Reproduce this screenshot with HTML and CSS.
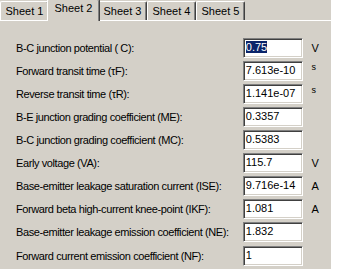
FILE: index.html
```html
<!DOCTYPE html>
<html>
<head>
    <title>Model Parameters</title>
    <link rel="stylesheet" href="styles.css">
</head>
<body>
    <div class="dialog">
        <!-- Tab strip -->
        <div class="tabs">
            <div class="tab">Sheet 1</div>
            <div class="tab active">Sheet 2</div>
            <div class="tab">Sheet 3</div>
            <div class="tab">Sheet 4</div>
            <div class="tab">Sheet 5</div>
        </div>

        <!-- Parameter rows -->
        <div class="sheet">
            <div class="row">
                <span class="label">B-C junction potential ( C):</span>
                <div class="field"><span class="selected">0.75</span></div>
                <span class="unit">V</span>
            </div>
            <div class="row">
                <span class="label">Forward transit time (τF):</span>
                <div class="field">7.613e-10</div>
                <span class="unit small">s</span>
            </div>
            <div class="row">
                <span class="label">Reverse transit time (τR):</span>
                <div class="field">1.141e-07</div>
                <span class="unit small">s</span>
            </div>
            <div class="row">
                <span class="label">B-E junction grading coefficient (ME):</span>
                <div class="field">0.3357</div>
                <span class="unit"></span>
            </div>
            <div class="row">
                <span class="label">B-C junction grading coefficient (MC):</span>
                <div class="field">0.5383</div>
                <span class="unit"></span>
            </div>
            <div class="row">
                <span class="label">Early voltage (VA):</span>
                <div class="field">115.7</div>
                <span class="unit">V</span>
            </div>
            <div class="row">
                <span class="label">Base-emitter leakage saturation current (ISE):</span>
                <div class="field">9.716e-14</div>
                <span class="unit">A</span>
            </div>
            <div class="row">
                <span class="label">Forward beta high-current knee-point (IKF):</span>
                <div class="field">1.081</div>
                <span class="unit">A</span>
            </div>
            <div class="row">
                <span class="label">Base-emitter leakage emission coefficient (NE):</span>
                <div class="field">1.832</div>
                <span class="unit"></span>
            </div>
            <div class="row last">
                <span class="label">Forward current emission coefficient (NF):</span>
                <div class="field">1</div>
                <span class="unit"></span>
            </div>
        </div>
    </div>
</body>
</html>
```

FILE: styles.css
```css
body {
    margin: 0;
    background: white;
    font-family: "Liberation Sans", Arial, sans-serif;
    font-size: 11px;
    color: black;
}

.dialog {
    width: 331px;
    height: 269px;
    background: #d4d0c8;
    overflow: hidden;
}

/* Tab strip */
.tabs {
    display: flex;
    height: 21px;
    align-items: flex-end;
    border-bottom: 1px solid white;
    box-sizing: border-box;
}

.tab {
    box-sizing: border-box;
    width: 49px;
    height: 19px;
    padding-top: 3px;
    text-align: center;
    border-top: 1px solid white;
    border-left: 1px solid white;
    border-right: 1px solid #404040;
    box-shadow: inset -1px 0 0 #808080;
    border-radius: 2px 2px 0 0;
}

.tab.active {
    position: relative;
    width: 53px;
    height: 22px;
    margin: 0 -2px -1px -2px;
    padding-top: 2px;
    background: #d4d0c8;
    z-index: 1;
}

/* Parameter sheet */
.sheet {
    padding: 15px 0 0 16px;
}

.row {
    display: flex;
    align-items: center;
    height: 23px;
}

.row.last {
    margin-top: 1px;
}

.label {
    width: 232px;
    white-space: nowrap;
    letter-spacing: -0.4px;
}

.field {
    box-sizing: border-box;
    width: 62px;
    height: 20px;
    padding: 2px 0 0 2px;
    background: white;
    border-top: 1px solid #808080;
    border-left: 1px solid #808080;
    border-right: 1px solid white;
    border-bottom: 1px solid white;
    box-shadow: inset 1px 1px 0 #404040, inset -1px -1px 0 #d4d0c8;
}

.selected {
    background: #0a246a;
    color: white;
}

.unit {
    width: 20px;
    padding-left: 8px;
}

.unit.small {
    font-size: 9px;
    align-self: flex-start;
    padding-top: 3px;
}
```
